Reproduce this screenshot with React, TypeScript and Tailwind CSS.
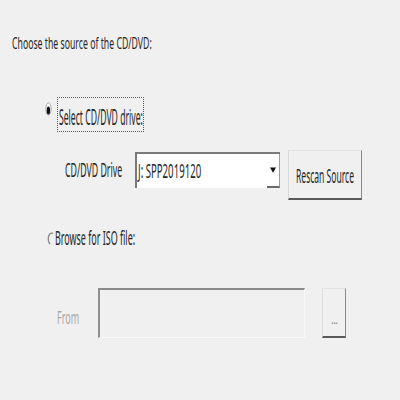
import React, { useLayoutEffect, useRef, useState } from "react";

function Fit({ className, children }: { className: string; children: React.ReactNode }) {
  const outer = useRef<HTMLSpanElement>(null);
  const inner = useRef<HTMLSpanElement>(null);
  const [s, setS] = useState(1);
  useLayoutEffect(() => {
    const m = () => {
      const o = outer.current;
      const i = inner.current;
      if (!o || !i || !i.offsetWidth) return;
      setS(o.clientWidth / i.offsetWidth);
    };
    m();
    if (document.fonts && document.fonts.ready) document.fonts.ready.then(m);
  }, []);
  return (
    <span ref={outer} className={"block overflow-visible whitespace-nowrap " + className}>
      <span ref={inner} className="inline-block whitespace-nowrap origin-left" style={{ transform: `scaleX(${s})` }}>
        {children}
      </span>
    </span>
  );
}

function RadioOn() {
  return (
    <svg width="7" height="14" viewBox="0 0 7 14" className="block">
      <ellipse cx="3.5" cy="7" rx="2.6" ry="6.2" fill="#fff" stroke="#a0a0a0" strokeWidth="0.9" />
      <ellipse cx="3.4" cy="8.4" rx="1.7" ry="4" fill="#111" />
    </svg>
  );
}

function RadioOff() {
  return (
    <svg width="7" height="13" viewBox="0 0 7 13" className="block">
      <path d="M6 1.3 C3.2 0.4 1.3 3 1.3 6.5 C1.3 9.5 2.3 11.5 3.3 12" fill="none" stroke="#8a8a8a" strokeWidth="1.3" />
    </svg>
  );
}

export default function App() {
  return (
    <div className="w-[400px] h-[400px] bg-[#f0f0f0] font-['Noto_Sans',sans-serif] text-[#262626] flex flex-col overflow-hidden">
      <div className="mt-[34px] ml-[12px] h-[17px] flex items-center">
        <Fit className="w-[140px] text-[17px] leading-none">Choose the source of the CD/DVD:</Fit>
      </div>

      <div className="mt-[46px] h-[35px] flex items-start">
        <div className="ml-[45px] mt-[5px]">
          <RadioOn />
        </div>
        <div className="ml-[5px] w-[87px] h-[35px] border border-dotted border-[#5a5a5a] flex items-center pl-[1px] pt-[2px]">
          <Fit className="w-[84px] text-[22px] leading-none">Select CD/DVD drive:</Fit>
        </div>
      </div>

      <div className="mt-[18px] h-[52px] flex items-start">
        <div className="ml-[65px] mt-[10px] h-[20px] flex items-center">
          <Fit className="w-[57px] text-[20px] leading-none">CD/DVD Drive</Fit>
        </div>
        <div className="ml-[13px] mt-[2px] w-[145px] h-[36px] bg-white border-t-2 border-l-2 border-[#7a7a7a] flex">
          <div className="flex-1 flex items-center pl-[1px]">
            <Fit className="w-[63px] text-[20px] leading-none">J: SPP2019120</Fit>
          </div>
          <div className="w-[13px] h-full border-r border-b-2 border-r-[#a0a0a0] border-b-[#6a6a6a] flex justify-center pt-[13px]">
            <svg width="6" height="6" viewBox="0 0 6 6" className="block">
              <path d="M0 0.5 H6 L3 5.8 Z" fill="#111" />
            </svg>
          </div>
        </div>
        <div className="ml-[8px] w-[74px] h-[50px] bg-[#f0f0f0] border-l border-t border-l-[#d8d8d8] border-t-[#e2e2e2] border-r border-r-[#8a8a8a] border-b-2 border-b-[#5a5a5a] flex items-center justify-center pt-[4px]">
          <Fit className="w-[58px] text-[19px] leading-none">Rescan Source</Fit>
        </div>
      </div>

      <div className="mt-[27px] h-[19px] flex items-center">
        <div className="ml-[47px]">
          <RadioOff />
        </div>
        <div className="ml-[1px]">
          <Fit className="w-[80px] text-[19px] leading-none">Browse for ISO file:</Fit>
        </div>
      </div>

      <div className="mt-[40px] h-[50px] flex items-start">
        <div className="ml-[57px] mt-[20px] h-[18px] flex items-center">
          <Fit className="w-[22px] text-[18px] leading-none text-[#a8a8a8]">From</Fit>
        </div>
        <div className="ml-[19px] w-[207px] h-[50px] bg-[#f0f0f0] border-t-2 border-l-2 border-t-[#8a8a8a] border-l-[#8f8f8f] border-r border-b border-r-[#f8f8f8] border-b-[#f8f8f8]" />
        <div className="ml-[17px] w-[24px] h-[50px] bg-[#f0f0f0] border-l border-t border-l-[#dcdcdc] border-t-[#e4e4e4] border-r border-r-[#8a8a8a] border-b-2 border-b-[#5a5a5a] flex items-end justify-center pb-[10px]">
          <span className="text-[12px] leading-none text-[#9a9a9a] tracking-[-1px]">...</span>
        </div>
      </div>
    </div>
  );
}
